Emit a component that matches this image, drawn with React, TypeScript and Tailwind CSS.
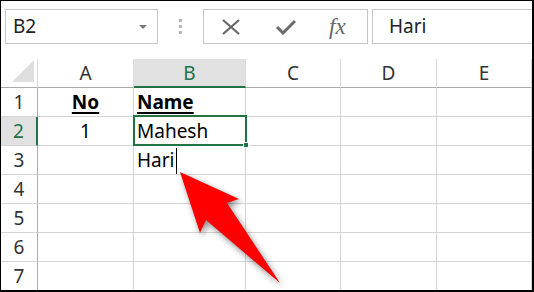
import React from "react";

const colW = ["w-[37px]", "w-[96px]", "w-[112px]", "w-[95px]", "w-[96px]", "w-[95px]"];
const letters = ["A", "B", "C", "D", "E"];
const rows = [1, 2, 3, 4, 5, 6, 7];

function Toolbar() {
  return (
    <div className="flex h-[58px] items-start pl-[4px] pt-[8px]">
      <div className="flex h-[35px] w-[153px] items-center justify-between border border-[#c6c6c6] bg-white pl-[7px] pr-[10px]">
        <span className="text-[19px] text-[#222]">B2</span>
        <span className="h-0 w-0 border-x-[4px] border-t-[4px] border-x-transparent border-t-[#7a7a7a]" />
      </div>
      <div className="flex h-[35px] w-[45px] flex-col items-center justify-center gap-[3px]">
        <span className="h-[3px] w-[3px] bg-[#b4b4b4]" />
        <span className="h-[3px] w-[3px] bg-[#b4b4b4]" />
        <span className="h-[3px] w-[3px] bg-[#b4b4b4]" />
      </div>
      <div className="flex h-[35px] w-[165px] items-center border border-[#c6c6c6] bg-white">
        <svg width="20" height="16" viewBox="0 0 20 16" className="ml-[17px]">
          <path d="M2 1 L18 15 M18 1 L2 15" stroke="#666" strokeWidth="2.2" fill="none" />
        </svg>
        <svg width="20" height="16" viewBox="0 0 20 16" className="ml-[35px]">
          <path d="M1 8 L7 14 L19 2" stroke="#6b6b6b" strokeWidth="3" fill="none" />
        </svg>
        <span className="ml-[33px] font-['Liberation_Serif',serif] text-[23px] italic leading-none text-[#666]">
          fx
        </span>
      </div>
      <div className="ml-[4px] flex h-[35px] flex-1 items-center border border-r-0 border-[#c6c6c6] bg-white pl-[16px]">
        <span className="text-[19px] text-[#222]">Hari</span>
      </div>
    </div>
  );
}

function Grid() {
  return (
    <div className="relative">
      {/* header row */}
      <div className="flex h-[29px]">
        <div className={`${colW[0]} relative h-full border-r border-b border-r-[#dadada] border-b-[#ababab]`}>
          <svg width="22" height="22" className="absolute bottom-[5px] right-[3px]" viewBox="0 0 22 22">
            <polygon points="22,0 22,22 0,22" fill="#dfdfdf" />
          </svg>
        </div>
        {letters.map((l, i) =>
          l === "B" ? (
            <div
              key={l}
              className={`${colW[i + 1]} flex h-full items-end justify-center border-r border-r-[#dadada] border-b-2 border-b-[#217346] bg-[#e1e1e1] pb-0 text-[19px] leading-[26px] text-[#217346]`}
            >
              {l}
            </div>
          ) : (
            <div
              key={l}
              className={`${colW[i + 1]} flex h-full items-end justify-center border-r border-b border-r-[#dadada] border-b-[#ababab] pb-[1px] text-[19px] leading-[26px] text-[#333]`}
            >
              {l}
            </div>
          )
        )}
      </div>
      {rows.map((r) => (
        <div key={r} className="flex h-[29px]">
          <div
            className={`${colW[0]} flex h-full items-end justify-center border-b border-b-[#d4d4d4] pb-[1px] text-[19px] leading-[26px] ${
              r === 2
                ? "border-r-2 border-r-[#217346] bg-[#e1e1e1] text-[#217346]"
                : "border-r border-r-[#ababab] text-[#333]"
            }`}
          >
            {r}
          </div>
          <div className={`${colW[1]} flex h-full items-end justify-center border-r border-b border-[#d4d4d4] pb-[1px] text-[19px] leading-[26px] text-black`}>
            {r === 1 && <span className="font-bold underline decoration-[1.5px] underline-offset-[3px]">No</span>}
            {r === 2 && <span>1</span>}
          </div>
          <div className={`${colW[2]} flex h-full items-end border-r border-b border-[#d4d4d4] pb-[1px] pl-[3px] text-[19px] leading-[26px] text-black`}>
            {r === 1 && <span className="font-bold underline decoration-[1.5px] underline-offset-[3px]">Name</span>}
            {r === 2 && <span>Mahesh</span>}
            {r === 3 && (
              <span className="flex items-end">
                Hari
                <span className="mb-[-1px] ml-[1px] h-[26px] w-[1px] bg-black" />
              </span>
            )}
          </div>
          <div className={`${colW[3]} h-full border-r border-b border-[#d4d4d4]`} />
          <div className={`${colW[4]} h-full border-r border-b border-[#d4d4d4]`} />
          <div className={`${colW[5]} h-full border-r border-b border-[#d4d4d4]`} />
        </div>
      ))}
      {/* active cell B2 */}
      <div className="pointer-events-none absolute left-[132px] top-[56px] h-[31px] w-[114px] border-2 border-[#217346]">
        <span className="absolute -bottom-[4px] -right-[4px] h-[6px] w-[6px] border border-white bg-[#217346]" />
      </div>
    </div>
  );
}

export default function App() {
  return (
    <div className="relative h-[292px] w-[534px] overflow-hidden border-t border-l border-r-2 border-b-2 border-black bg-white font-['Noto_Sans',sans-serif]">
      <Toolbar />
      <Grid />
      <svg
        className="pointer-events-none absolute left-[-1px] top-[-1px]"
        width="534"
        height="292"
        viewBox="0 0 534 292"
        style={{ filter: "drop-shadow(2px 3px 3px rgba(0,0,0,0.45))" }}
      >
        <polygon points="180,172 239,199 227,203 280,283 206,220 200,233" fill="#ff0000" />
      </svg>
    </div>
  );
}
